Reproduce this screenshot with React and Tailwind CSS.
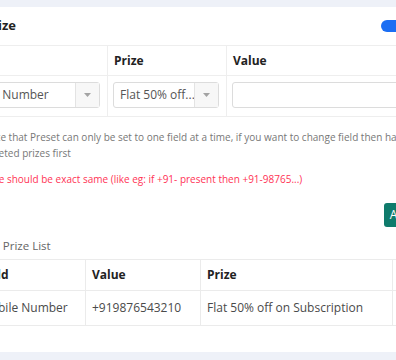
import React from 'react';

const Caret = () => (
  <svg width="7" height="4" viewBox="0 0 7 4">
    <path d="M0 0h7L3.5 4z" fill="#a3a3a3" />
  </svg>
);

const Select = ({ value, width }) => (
  <div className={`flex h-[26px] ${width} rounded-[3px] border border-[#dcdcdc] bg-white`}>
    <div className="flex flex-1 items-center overflow-hidden whitespace-nowrap px-[6px] text-[12px] text-[#555]">
      {value}
    </div>
    <div className="flex w-[24px] items-center justify-center border-l border-[#e3e3e3] bg-[#f7f7f7]">
      <Caret />
    </div>
  </div>
);

const App = () => {
  return (
    <div className="h-[360px] w-[396px] overflow-hidden bg-[#eef1f8] pt-[7px] font-['Open_Sans',sans-serif]">
      <div className="-ml-[80px] h-[345px] w-[560px] bg-white">
        {/* Header */}
        <div className="flex h-[39px] items-center border-b border-[#eeeeee] pl-[19px] pr-[62px]">
          <h2 className="text-[13px] font-bold text-[#222]">Preset Prize</h2>
          <div className="relative ml-auto h-[12px] w-[37px] rounded-full bg-[#1b6ef3]">
            <span className="absolute right-[2px] top-[2px] h-[8px] w-[8px] rounded-full bg-white" />
          </div>
        </div>

        {/* Preset table */}
        <div className="flex h-[30px] border-b border-[#eeeeee] text-[12px] font-bold text-[#222]">
          <div className="flex w-[188px] shrink-0 items-center border-r border-[#eeeeee] pl-[34px]">Field</div>
          <div className="flex w-[119px] shrink-0 items-center border-r border-[#eeeeee] px-[6px]">Prize</div>
          <div className="flex flex-1 items-center pl-[6px]">Value</div>
        </div>
        <div className="flex h-[41px] border-b border-[#eeeeee]">
          <div className="w-[188px] shrink-0 border-r border-[#eeeeee] pl-[34px] pt-[6px]">
            <Select value="Mobile Number" width="w-[146px]" />
          </div>
          <div className="w-[119px] shrink-0 border-r border-[#eeeeee] pl-[5px] pt-[6px]">
            <Select value="Flat 50% off..." width="w-[106px]" />
          </div>
          <div className="flex-1 pl-[5px] pr-4 pt-[6px]">
            <input className="h-[26px] w-full rounded-[3px] border border-[#dcdcdc] outline-none" />
          </div>
        </div>

        <p className="mt-3 whitespace-nowrap pl-[32px] text-[10px] leading-4 text-[#777]">
          Please note that Preset can only be set to one field at a time, if you want to change field then have to delete all
          <br />
          the completed prizes first
        </p>
        <p className="mt-[10px] whitespace-nowrap pl-[34px] text-[10px] leading-4 text-[#ff3355]">
          Field Value should be exact same (like eg: if +91- present then +91-98765...)
        </p>

        <div className="mt-4 flex justify-end pr-[62px]">
          <button className="h-[24px] rounded-[3px] bg-[#0f7b6c] px-[6px] text-[12px] text-white">Add</button>
        </div>

        <div className="mt-[11px] pl-[45px] text-[11.5px] leading-4 text-[#666]">Added Prize List</div>

        {/* Prize list table */}
        <div className="mr-4 ml-[52px] mt-[5px] border-l border-t border-[#ebebeb] text-[12px]">
          <div className="flex h-[31px] border-b border-[#ebebeb] font-bold text-[#222]">
            <div className="flex w-[113px] shrink-0 items-center border-r border-[#ebebeb] pl-[7px]">Field</div>
            <div className="flex w-[115px] shrink-0 items-center border-r border-[#ebebeb] pl-[6px]">Value</div>
            <div className="flex w-[192px] shrink-0 items-center border-r border-[#ebebeb] pl-[6px]">Prize</div>
            <div className="flex flex-1 items-center pl-[6px]">Action</div>
          </div>
          <div className="flex h-[35px] border-b border-[#ebebeb] text-[#4a4a4a]">
            <div className="flex w-[113px] shrink-0 items-center border-r border-[#ebebeb] pl-[7px]">Mobile Number</div>
            <div className="flex w-[115px] shrink-0 items-center border-r border-[#ebebeb] pl-[6px]">+919876543210</div>
            <div className="flex w-[192px] shrink-0 items-center whitespace-nowrap border-r border-[#ebebeb] pl-[6px]">
              Flat 50% off on Subscription
            </div>
            <div className="flex flex-1 items-center pl-[6px]" />
          </div>
        </div>
      </div>
    </div>
  );
};

export default App;
